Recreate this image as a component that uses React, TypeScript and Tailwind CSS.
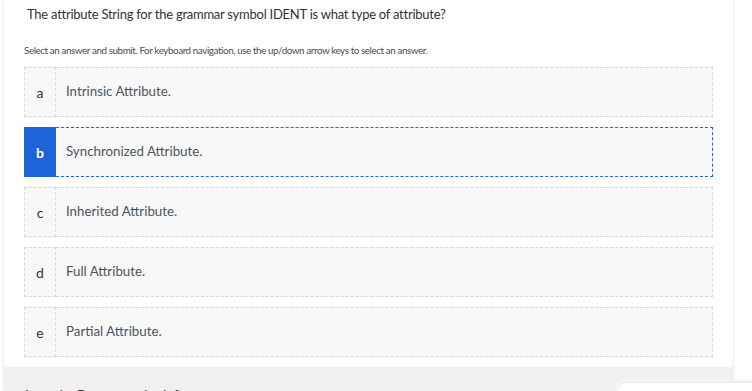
const options = [
  { key: 'a', label: 'Intrinsic Attribute.' },
  { key: 'b', label: 'Synchronized Attribute.' },
  { key: 'c', label: 'Inherited Attribute.' },
  { key: 'd', label: 'Full Attribute.' },
  { key: 'e', label: 'Partial Attribute.' },
];

const selected = 'b';

function Option({ letter, label, active }: { letter: string; label: string; active: boolean }) {
  return (
    <div className="flex h-[50px] w-[689px]">
      {active ? (
        <div className="flex w-[32px] items-center justify-center bg-[#1e63d7] text-[14px] font-bold text-white">
          {letter}
        </div>
      ) : (
        <div className="flex w-[32px] items-center justify-center border border-dashed border-[#d9d9dc] bg-[#f8f8f8] text-[14px] text-[#333]">
          {letter}
        </div>
      )}
      <div
        className={
          active
            ? 'flex flex-1 items-center border-y border-r border-dashed border-[#1d66e0] bg-[#f8f8f8] pl-[10px] text-[13.3px] text-[#4a5561]'
            : 'flex flex-1 items-center border-y border-r border-dashed border-[#d9d9dc] bg-[#f8f8f8] pl-[10px] text-[13.3px] text-[#4a5561]'
        }
      >
        {label}
      </div>
    </div>
  );
}

export default function App() {
  return (
    <div className="relative flex h-[391px] w-[752px] overflow-hidden bg-white pl-[4px] font-['Lato','Open_Sans',sans-serif]">
      <div className="flex w-[729px] flex-col shadow-[0_0_3px_rgba(0,0,0,0.14)]">
        {/* question card */}
        <div className="h-[367px] shrink-0 bg-white">
          <p className="pl-[23px] pt-[4px] text-[13px] leading-[20px] tracking-[-0.25px] text-[#333]">
            The attribute String for the grammar symbol IDENT is what type of attribute?
          </p>
          <p className="mt-[18px] pl-[20px] text-[9.8px] leading-[16px] tracking-[-0.4px] text-[#4d4d4d]">
            Select an answer and submit. For keyboard navigation, use the up/down arrow keys to select an answer.
          </p>
          <div className="mt-[9px] flex flex-col gap-[10px] pl-[20px]">
            {options.map((o) => (
              <Option key={o.key} letter={o.key} label={o.label} active={o.key === selected} />
            ))}
          </div>
        </div>

        {/* footer strip */}
        <div className="min-h-0 flex-1 bg-[#f0f0f0] pl-[21px] pt-[18px] text-[14px] leading-[20px] text-[#333]">
          I need a Button to the left
        </div>
      </div>

      {/* floating widget */}
      <div className="absolute left-[615px] top-[379px] h-[40px] w-[160px] rounded-tl-[10px] bg-[#f5f5f5] p-[2px] pt-[4px]">
        <div className="h-full w-full rounded-tl-[10px] bg-white shadow-[0_-1px_3px_rgba(0,0,0,0.06)]" />
      </div>
    </div>
  );
}
